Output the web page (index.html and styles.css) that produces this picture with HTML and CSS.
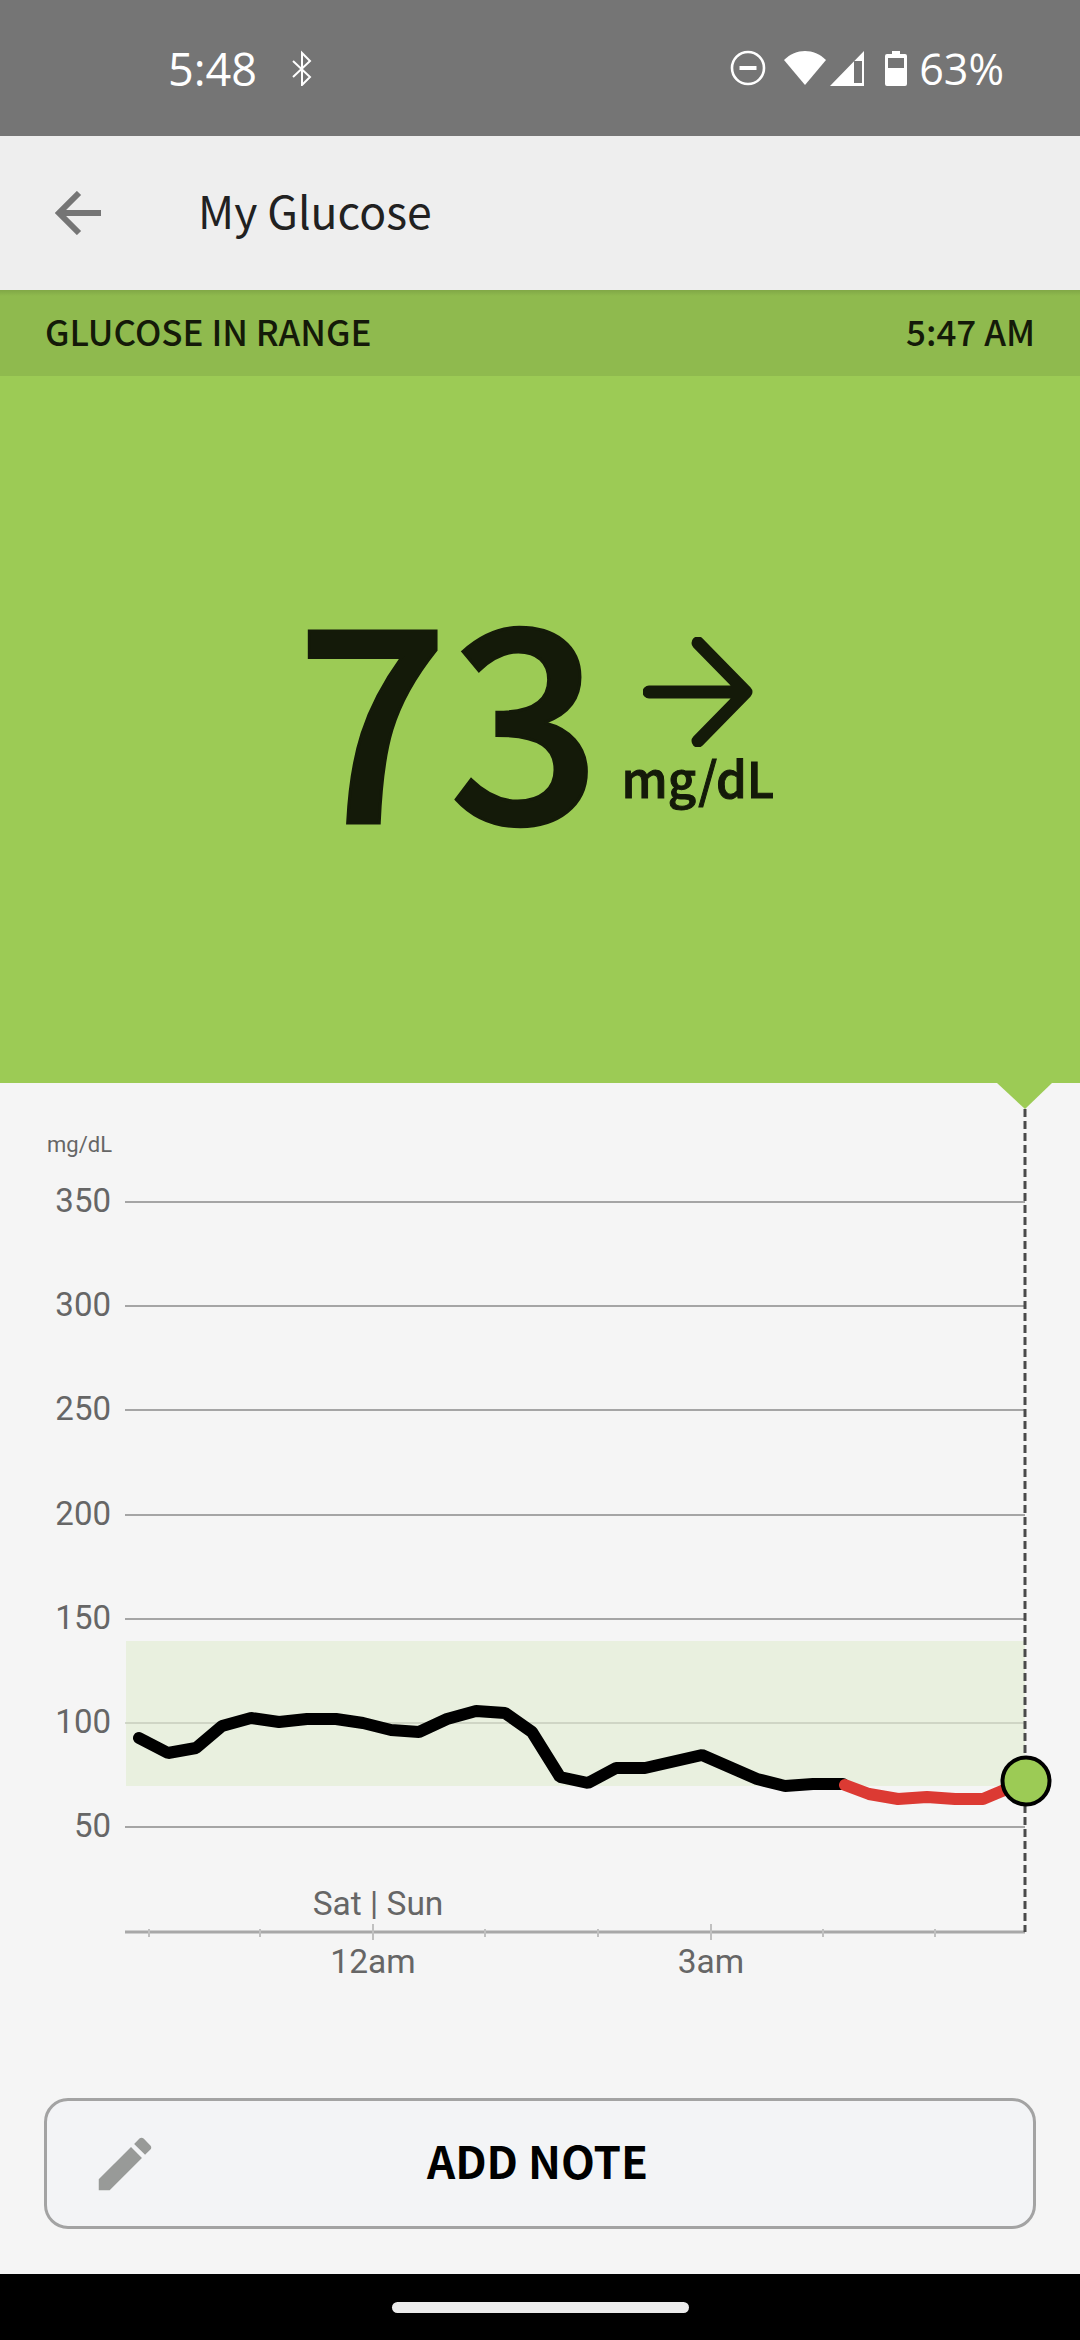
FILE: index.html
```html
<!DOCTYPE html>
<html lang="en">
<head>
    <meta charset="UTF-8">
    <title>My Glucose</title>
    <link rel="stylesheet" href="styles.css">
</head>
<body>
    <div class="status-bar">
        <div class="status-left">
            <span class="status-time">5:48</span>
            <svg class="icon-bt" viewBox="0 0 22 36" width="22" height="36">
                <path d="M2 11 L19 27 L11 35 V3 L19 11 L2 27" fill="none" stroke="#fff" stroke-width="2"/>
            </svg>
        </div>
        <div class="status-right">
            <svg class="icon-dnd" viewBox="0 0 36 36" width="36" height="36">
                <circle cx="18" cy="18" r="16" fill="none" stroke="#fff" stroke-width="2.6"/>
                <rect x="9.5" y="16" width="17" height="4" fill="#fff"/>
            </svg>
            <svg class="icon-wifi" viewBox="0 0 42 36" width="42" height="36">
                <path d="M0 10 C12 -2 30 -2 42 10 L21 35 Z" fill="#fff"/>
            </svg>
            <svg class="icon-signal" viewBox="0 0 36 36" width="36" height="36">
                <path fill-rule="evenodd" d="M35 1 V36 H1 Z M33 11 H25 V33 H33 Z" fill="#fff"/>
            </svg>
            <svg class="icon-battery" viewBox="0 0 22 36" width="22" height="36">
                <path fill-rule="evenodd" d="M7 1 H15 V4 H20 Q22 4 22 6 V34 Q22 36 20 36 H2 Q0 36 0 34 V6 Q0 4 2 4 H7 Z M3 8 V18 H19 V8 Z" fill="#fff"/>
            </svg>
            <span class="status-pct">63%</span>
        </div>
    </div>

    <header class="app-bar">
        <svg class="icon-back" viewBox="0 0 46 44" width="46" height="44">
            <path d="M46 22 H5 M24 2 L4 22 L24 42" fill="none" stroke="#757575" stroke-width="6"/>
        </svg>
        <h1 class="app-title">My Glucose</h1>
    </header>

    <div class="range-band">
        <span>GLUCOSE IN RANGE</span>
        <span>5:47 AM</span>
    </div>

    <section class="hero">
        <div class="reading">73</div>
        <div class="reading-side">
            <svg class="icon-trend" viewBox="0 0 110 110" width="110" height="110">
                <path d="M6 55 H103 M55 6 L103 55 L55 104" fill="none" stroke="#141a09" stroke-width="13" stroke-linecap="round" stroke-linejoin="bevel"/>
            </svg>
            <div class="reading-unit">mg/dL</div>
        </div>
    </section>

    <main class="chart-area">
        <svg class="chart" viewBox="0 0 1080 1015" width="1080" height="1015">
            <rect class="target-band" x="126" y="558" width="899" height="145"/>
            <g class="grid">
                <line x1="125" x2="1025" y1="119" y2="119"/>
                <line x1="125" x2="1025" y1="223" y2="223"/>
                <line x1="125" x2="1025" y1="327" y2="327"/>
                <line x1="125" x2="1025" y1="432" y2="432"/>
                <line x1="125" x2="1025" y1="536" y2="536"/>
                <line x1="125" x2="1025" y1="640" y2="640" class="in-band"/>
                <line x1="125" x2="1025" y1="744" y2="744"/>
            </g>
            <line class="axis" x1="125" x2="1025" y1="849" y2="849"/>
            <g class="ticks">
                <line x1="149" x2="149" y1="846" y2="854"/>
                <line x1="260" x2="260" y1="846" y2="854"/>
                <line x1="373" x2="373" y1="841" y2="857"/>
                <line x1="485" x2="485" y1="846" y2="854"/>
                <line x1="598" x2="598" y1="846" y2="854"/>
                <line x1="711" x2="711" y1="841" y2="857"/>
                <line x1="823" x2="823" y1="846" y2="854"/>
                <line x1="935" x2="935" y1="846" y2="854"/>
            </g>
            <text class="unit-label" x="112" y="69">mg/dL</text>
            <g class="y-labels">
                <text x="111" y="129">350</text>
                <text x="111" y="233">300</text>
                <text x="111" y="337">250</text>
                <text x="111" y="442">200</text>
                <text x="111" y="546">150</text>
                <text x="111" y="650">100</text>
                <text x="111" y="754">50</text>
            </g>
            <g class="x-labels">
                <text x="378" y="832">Sat | Sun</text>
                <text x="373" y="890">12am</text>
                <text x="711" y="890">3am</text>
            </g>
            <line class="cursor" x1="1025" x2="1025" y1="26" y2="849"/>
            <polygon class="pointer" points="997,0 1052,0 1025,26"/>
            <polyline class="trace" points="139,655 168,670 196,665 222,643 251,635 279,639 307,636 336,636 363,640 391,647 419,649 447,636 476,628 505,630 532,649 560,694 588,700 616,685 645,685 702,672 757,696 785,703 813,701 843,701"/>
            <polyline class="trace trace-low" points="845,702 869,711 898,716 927,714 955,716 983,716 1002,708 1026,697"/>
            <circle class="now-dot" cx="1026" cy="698" r="23.5"/>
        </svg>
    </main>

    <div class="action-row">
        <button class="note-button">
            <svg class="icon-pencil" viewBox="0 0 24 24" width="70" height="70">
                <path d="M3 17.25V21h3.75L17.81 9.94l-3.75-3.75L3 17.25zM20.71 7.04c.39-.39.39-1.02 0-1.41l-2.34-2.34c-.39-.39-1.02-.39-1.41 0l-1.83 1.83 3.75 3.75 1.83-1.83z" fill="#989a98"/>
            </svg>
            <span class="note-label">ADD NOTE</span>
        </button>
    </div>

    <div class="nav-strip">
        <div class="home-pill"></div>
    </div>
</body>
</html>
```

FILE: styles.css
```css
:root {
    --ink: #141a09;
    --in-range: #9ccb55;
    --in-range-dark: #8fba4e;
    --label-gray: #666666;
}

* {
    box-sizing: border-box;
}

body {
    margin: 0;
    width: 1080px;
    height: 2340px;
    overflow: hidden;
    background: #f5f5f5;
    font-family: "Noto Sans CJK JP", "Noto Sans", sans-serif;
}

.status-bar {
    height: 136px;
    background: #757575;
    color: #fff;
    display: flex;
    justify-content: space-between;
    align-items: center;
    padding: 0 76px 0 168px;
    font-family: "Open Sans", sans-serif;
    font-size: 45px;
    font-weight: 500;
}

.status-left,
.status-right {
    display: flex;
    align-items: center;
}

.icon-bt {
    margin-left: 34px;
}

.icon-wifi {
    margin-left: 18px;
}

.icon-signal {
    margin-left: 3px;
}

.icon-battery {
    margin-left: 20px;
}

.status-pct {
    margin-left: 12px;
    font-size: 43px;
}

.app-bar {
    height: 154px;
    background: #eeeeee;
    display: flex;
    align-items: center;
    padding-left: 55px;
}

.app-title {
    margin: 0 0 8px 97px;
    font-size: 44.5px;
    font-weight: 400;
    color: #212121;
}

.range-band {
    height: 86px;
    background: linear-gradient(rgba(0, 0, 0, 0.1), rgba(0, 0, 0, 0) 6px), var(--in-range-dark);
    display: flex;
    justify-content: space-between;
    align-items: center;
    padding: 0 45px 6px;
    font-size: 35px;
    font-weight: 500;
    color: var(--ink);
}

.hero {
    height: 707px;
    background: var(--in-range);
    color: var(--ink);
    display: flex;
    justify-content: center;
    align-items: flex-start;
    padding: 164px 10px 0 0;
}

.reading {
    margin-top: -4px;
    font-size: 268px;
    line-height: 340px;
    font-weight: 500;
    -webkit-text-stroke: 3px var(--ink);
}

.reading-side {
    margin-left: 20px;
    padding-top: 97px;
    display: flex;
    flex-direction: column;
    align-items: center;
}

.reading-unit {
    font-size: 49px;
    line-height: 60px;
    font-weight: 500;
    -webkit-text-stroke: 1px var(--ink);
}

.chart-area {
    height: 1015px;
}

.chart {
    display: block;
    overflow: visible;
}

.target-band {
    fill: #e9f0df;
}

.grid line {
    stroke: #8a8a8a;
    stroke-width: 1.5;
}

.grid .in-band {
    stroke: #c6cdbc;
}

.axis {
    stroke: #a8a8a8;
    stroke-width: 3;
}

.ticks line {
    stroke: #c0c0c0;
    stroke-width: 2;
}

.chart text {
    font-family: Roboto, sans-serif;
    fill: var(--label-gray);
}

.unit-label {
    font-size: 22px;
    text-anchor: end;
}

.y-labels text {
    font-size: 33px;
    text-anchor: end;
}

.x-labels text {
    font-size: 33.5px;
    text-anchor: middle;
}

.cursor {
    stroke: #4a4a4a;
    stroke-width: 3;
    stroke-dasharray: 8 4;
}

.pointer {
    fill: var(--in-range);
}

.trace {
    fill: none;
    stroke: #000;
    stroke-width: 12;
    stroke-linecap: round;
    stroke-linejoin: bevel;
}

.trace-low {
    stroke: #dc3a33;
}

.now-dot {
    fill: var(--in-range);
    stroke: #000;
    stroke-width: 4;
}

.action-row {
    height: 176px;
    padding: 0 44px;
}

.note-button {
    width: 100%;
    height: 131px;
    padding: 0 0 0 43px;
    background: #f3f4f6;
    border: 3px solid #a3a3a3;
    border-radius: 24px;
    display: flex;
    align-items: center;
    font-family: inherit;
}

.note-label {
    margin: 0 0 8px 267px;
    font-size: 44px;
    font-weight: 700;
    color: #000;
}

.nav-strip {
    height: 66px;
    background: #000;
    display: flex;
    justify-content: center;
    padding-top: 28px;
}

.home-pill {
    width: 297px;
    height: 11px;
    border-radius: 6px;
    background: #ececec;
}
```
